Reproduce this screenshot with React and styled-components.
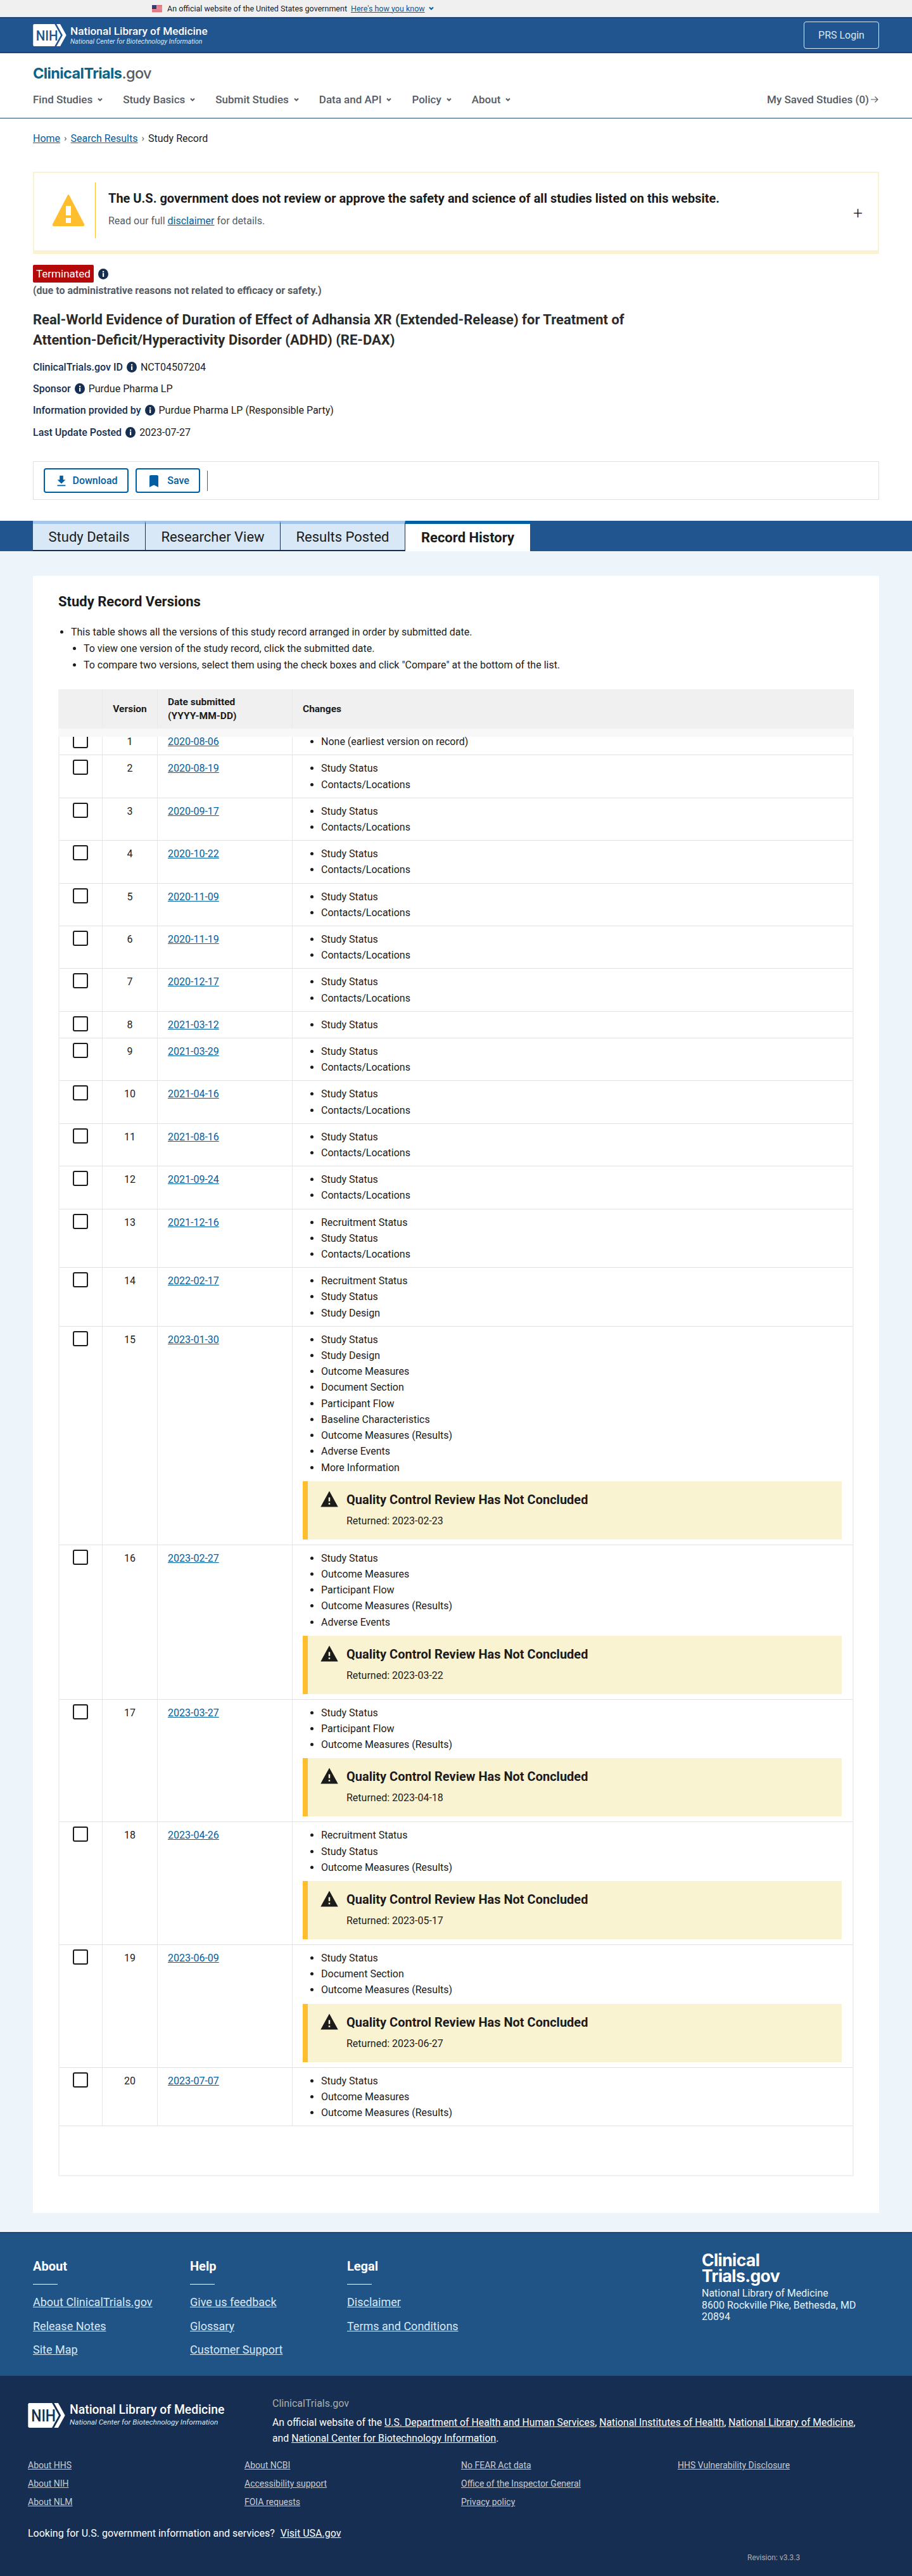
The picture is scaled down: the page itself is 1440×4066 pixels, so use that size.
import React from "react";
import styled, { createGlobalStyle } from "styled-components";

const Colors = {
  blue: "#205590",
  footerBlue: "#205487",
  navy: "#162e51",
  link: "#005ea2",
  text: "#1b1b1b",
  grey: "#565c65",
  line: "#dfe1e2",
  page: "#edf5fb",
  warn: "#ffbe2e",
  warnBg: "#faf3d1",
};

const GlobalStyle = createGlobalStyle`
  * { box-sizing: border-box; }
  html, body { margin: 0; padding: 0; background: #fff; }
  body { font-family: Roboto, "Liberation Sans", sans-serif; color: ${Colors.text}; font-size: 16px; }
  a { color: ${Colors.link}; }
`;

const Banner = styled.div`
  height: 27px;
  background: #f0f0f0;
  border-bottom: 1px solid #d9e8f6;
  display: flex;
  align-items: center;
  padding-left: 240px;
  font-size: 12.5px;
  color: ${Colors.text};
`;
const BannerText = styled.span`
  margin: 0 6px 0 8px;
`;
const BannerLink = styled.a`
  margin-right: 5px;
`;

const TopBar = styled.header`
  height: 57px;
  background: ${Colors.blue};
  border-top: 2px solid #1a4480;
  border-bottom: 2px solid #1a4480;
  padding: 0 52px;
  display: flex;
  align-items: center;
  justify-content: space-between;
`;
const LogoRow = styled.div`
  display: flex;
  align-items: center;
  gap: 6px;
`;
const LogoName = styled.div`
  font-size: ${(p) => p.$size}px;
  font-weight: 500;
  line-height: ${(p) => p.$size + 3}px;
  color: #fff;
`;
const LogoSub = styled.div`
  font-size: ${(p) => p.$size}px;
  font-style: italic;
  line-height: ${(p) => p.$size + 3}px;
  color: #d9e8f6;
`;
const LoginBtn = styled.a`
  width: 119px;
  height: 43px;
  border: 1.5px solid #d9e8f6;
  border-radius: 4px;
  display: flex;
  align-items: center;
  justify-content: center;
  color: #d9e8f6;
  font-size: 16px;
`;

const SiteHead = styled.div`
  height: 103px;
  padding: 18px 52px 0;
  border-bottom: 1px solid #20496b;
`;
const Brand = styled.div`
  font-family: Inter, sans-serif;
  font-size: 23.5px;
  font-weight: 700;
  line-height: 28px;
  letter-spacing: -0.6px;
  color: #0a6586;
`;
const BrandGov = styled.span`
  font-weight: 500;
  color: ${Colors.grey};
`;
const Nav = styled.nav`
  display: flex;
  align-items: center;
  margin-top: 15px;
  height: 24px;
  color: ${Colors.grey};
  font-size: 17px;
  font-weight: 500;
`;
const NavItem = styled.span`
  display: flex;
  align-items: center;
  gap: 7px;
  margin-right: 31px;
`;
const SavedLink = styled.span`
  margin-left: auto;
  display: flex;
  align-items: center;
  gap: 2px;
`;

const Content = styled.div`
  padding: 20px 52px 0;
`;
const Crumbs = styled.div`
  display: flex;
  align-items: center;
  gap: 6px;
  height: 22px;
  font-size: 16px;
`;
const CrumbSep = styled.span`
  color: ${Colors.grey};
  font-size: 15px;
`;

const Disclaimer = styled.div`
  margin-top: 42px;
  height: 130px;
  border: 2px solid ${Colors.warnBg};
  border-bottom-width: 6px;
  padding: 15px 28px 19px;
  display: flex;
  align-items: stretch;
  position: relative;
`;
const DisclaimerIcon = styled.div`
  width: 52px;
  display: flex;
  align-items: center;
`;
const DisclaimerBody = styled.div`
  margin-left: 16px;
  padding-left: 20px;
  border-left: 1px solid ${Colors.warn};
  padding-top: 11px;
`;
const DisclaimerTitle = styled.div`
  font-size: 20px;
  font-weight: 700;
  line-height: 28px;
`;
const DisclaimerSub = styled.div`
  margin-top: 10px;
  color: ${Colors.grey};
  line-height: 24px;
`;
const PlusIcon = styled.div`
  position: absolute;
  right: 24px;
  top: 50px;
  font-size: 26px;
  font-weight: 300;
  line-height: 26px;
  color: #222;
`;

const StatusRow = styled.div`
  margin-top: 17px;
  display: flex;
  align-items: center;
  gap: 7px;
`;
const StatusTag = styled.span`
  width: 96px;
  height: 28px;
  background: #b50909;
  border-radius: 2px;
  color: #fff;
  display: flex;
  align-items: center;
  justify-content: center;
  font-size: 17px;
`;
const StatusNote = styled.div`
  margin-top: 2px;
  font-size: 16px;
  font-weight: 700;
  color: ${Colors.grey};
  line-height: 22px;
`;
const StudyTitle = styled.h1`
  margin: 19px 0 0;
  width: 1010px;
  font-size: 22px;
  line-height: 32px;
  font-weight: 700;
  color: #2b2b2b;
`;
const MetaList = styled.div`
  margin-top: 9px;
`;
const MetaRow = styled.div`
  height: 34.3px;
  display: flex;
  align-items: center;
  gap: 6px;
`;
const MetaLabel = styled.span`
  color: ${Colors.navy};
  font-weight: 500;
`;
const ActionBar = styled.div`
  margin-top: 29px;
  height: 61px;
  border: 1px solid ${Colors.line};
  padding: 10px 16px;
  display: flex;
  align-items: center;
  gap: 11px;
`;
const ActionBtn = styled.a`
  width: ${(p) => p.$w}px;
  height: 39px;
  border: 2px solid ${Colors.link};
  border-radius: 4px;
  display: flex;
  align-items: center;
  justify-content: center;
  gap: ${(p) => p.$gap}px;
  color: ${Colors.link};
  font-weight: 500;
  font-size: 16px;
`;
const ActionSep = styled.span`
  width: 1px;
  height: 32px;
  background: ${Colors.grey};
`;

const TabBand = styled.div`
  margin-top: 33px;
  height: 48px;
  background: ${Colors.blue};
  padding-left: 52px;
  display: flex;
`;
const Tab = styled.div`
  width: ${(p) => p.$w}px;
  display: flex;
  align-items: center;
  justify-content: center;
  font-size: 22px;
  color: ${Colors.text};
  background: ${(p) => (p.$active ? "#fff" : "#d9e8f6")};
  font-weight: ${(p) => (p.$active ? 700 : 400)};
  border-top: 5px solid ${(p) => (p.$active ? Colors.link : "#a1c6ea")};
  border-right: ${(p) => (p.$active ? "none" : `1px solid ${Colors.navy}`)};
  border-bottom: ${(p) => (p.$active ? "none" : `2px solid ${Colors.navy}`)};
`;

const Page = styled.main`
  background: ${Colors.page};
  padding: 39px 52px 30px;
`;
const Card = styled.section`
  height: 2584px;
  background: #fff;
  padding: 26px 40px 0;
`;
const CardTitle = styled.h2`
  margin: 0;
  height: 30px;
  font-size: 22px;
  line-height: 30px;
  font-weight: 700;
`;
const Intro = styled.ul`
  margin: 20px 0 0;
  padding-left: 20px;
  line-height: 26px;
  color: ${Colors.text};
`;
const IntroSub = styled.ul`
  margin: 0;
  padding-left: 20px;
  list-style: disc;
`;

const VersionTable = styled.div`
  margin-top: 25px;
  height: 2347px;
  border-left: 2px solid #f0f0f0;
  border-right: 2px solid #f0f0f0;
  border-bottom: 2px solid #f0f0f0;
`;
const HeadRow = styled.div`
  height: 62px;
  margin: 0 -2px;
  background: #f0f0f0;
  display: grid;
  grid-template-columns: 70px 87px 213px 1fr;
  font-weight: 700;
  font-size: 15.5px;
  line-height: 22px;
  position: relative;
  z-index: 1;

  &::after {
    content: "";
    position: absolute;
    left: 0;
    right: 0;
    top: 100%;
    height: 13px;
    background: #f8f8f8;
  }
`;
const HeadCell = styled.div`
  display: flex;
  align-items: center;
  padding-left: ${(p) => p.$pad}px;
  justify-content: ${(p) => (p.$center ? "center" : "flex-start")};
  border-right: 1px solid #eaeaea;
`;
const Row = styled.div`
  display: grid;
  grid-template-columns: 68px 87px 213px 1fr;
  border-bottom: 1px solid ${Colors.line};
`;
const Cell = styled.div`
  padding: 8px;
  line-height: 25.2px;
  border-right: 1px solid ${(p) => (p.$last ? "transparent" : "#e6e7e8")};
  text-align: ${(p) => (p.$center ? "center" : "left")};
`;
const DateCell = styled(Cell)`
  padding-left: 16px;
`;
const CheckCell = styled(Cell)`
  padding: 7px 0 0 21px;
`;
const Check = styled.div`
  width: 24px;
  height: 24px;
  border: 2px solid ${Colors.text};
  border-radius: 3px;
  background: #fff;
`;
const Changes = styled.ul`
  margin: 0;
  padding-left: 37px;
`;
const ChangesCell = styled(Cell)`
  padding: 8px 16px 8px 8px;
`;
const QcNotice = styled.div`
  margin: 9px 0 0 8px;
  height: 92px;
  background: ${Colors.warnBg};
  border-left: 8px solid ${Colors.warn};
  padding: 15px 0 0 19px;
  display: grid;
  grid-template-columns: 42px 1fr;
  align-items: center;
  align-content: start;
`;
const QcIcon = styled.div`
  display: flex;
  margin-top: -2px;
`;
const QcTitle = styled.div`
  font-size: 20px;
  font-weight: 700;
  line-height: 28px;
`;
const QcDate = styled.div`
  grid-column: 2;
  margin-top: 8px;
  line-height: 24px;
`;

const FooterTop = styled.div`
  height: 227px;
  background: ${Colors.footerBlue};
  border-top: 2px solid #1a4480;
  padding: 0 52px;
  display: flex;
`;
const FooterCol = styled.div`
  width: 248px;
  padding-top: 39px;
`;
const FooterHead = styled.div`
  font-size: 20px;
  font-weight: 700;
  line-height: 26px;
  color: #fff;
`;
const FooterRule = styled.div`
  width: 39px;
  height: 1px;
  background: #fff;
  margin: 15px 0 16px;
`;
const FooterLink = styled.a`
  display: block;
  color: #d9e8f6;
  font-size: 18px;
  line-height: 24px;
  margin-bottom: 13.5px;
  text-decoration: underline;
`;
const FooterAddress = styled.div`
  margin-left: auto;
  width: 280px;
  padding-top: 30px;
  color: #e7f2f5;
  font-size: 16px;
  line-height: 18.5px;
`;
const FooterBrand = styled.div`
  font-family: Inter, sans-serif;
  color: #fff;
  font-size: 26.5px;
  font-weight: 700;
  line-height: 25px;
  letter-spacing: -0.6px;
  margin-bottom: 6px;
`;

const FooterBottom = styled.footer`
  height: 316px;
  background: ${Colors.navy};
  padding: 34px 44px 0;
  color: #fff;
`;
const FooterMain = styled.div`
  display: flex;
`;
const FooterLogo = styled(LogoRow)`
  width: 386px;
  align-items: flex-start;
  padding-top: 9px;
  gap: 7px;
`;
const OfficialName = styled.div`
  color: #a9aeb1;
  font-size: 16px;
  line-height: 20px;
`;
const OfficialText = styled.div`
  margin-top: 7px;
  width: 950px;
  font-size: 15.8px;
  line-height: 25px;
  a { color: #fff; }
`;
const LinkGrid = styled.div`
  margin-top: 19px;
  display: grid;
  grid-template-columns: repeat(4, 342px);
  row-gap: 7px;
  font-size: 14px;
  line-height: 22px;
  a { color: #c9ccd2; }
`;
const LookingFor = styled.div`
  margin-top: 27px;
  font-size: 16px;
  line-height: 24px;
  a { color: #fff; margin-left: 5px; }
`;
const Revision = styled.div`
  margin: 18px 0 0 1136px;
  font-size: 12px;
  line-height: 16px;
  color: #a9aeb1;
`;

const Chevron = ({ color = "currentColor", size = 10 }) => (
  <svg width={size} height={size} viewBox="0 0 10 10">
    <path d="M2 3.5 L5 6.5 L8 3.5" fill="none" stroke={color} strokeWidth="2" />
  </svg>
);

const ArrowRight = () => (
  <svg width="14" height="14" viewBox="0 0 14 14">
    <path d="M1 7 H12 M7.5 2.5 L12 7 L7.5 11.5" fill="none" stroke={Colors.grey} strokeWidth="1.2" />
  </svg>
);

const Flag = () => (
  <svg width="16" height="11" viewBox="0 0 16 11">
    <rect width="16" height="11" fill="#fff" />
    {[0, 2, 4, 6, 8, 10].map((y) => (
      <rect key={y} y={y} width="16" height="1" fill="#c8313e" />
    ))}
    <rect width="7" height="6" fill="#3c3b6e" />
  </svg>
);

const NihLogo = ({ ink, width }) => (
  <svg width={width} height={width * 0.66} viewBox="0 0 54 36">
    <path d="M2 0 H35 L45 18 L35 36 H2 Q0 36 0 34 V2 Q0 0 2 0 Z" fill="#fff" />
    <path d="M38 0 H44 L54 18 L44 36 H38 L48 18 Z" fill="#fff" />
    <text x="4.5" y="26.5" fontFamily="Roboto, sans-serif" fontSize="23" fontWeight="500" fill={ink} textLength="36" lengthAdjust="spacingAndGlyphs">
      NIH
    </text>
  </svg>
);

const Info = () => (
  <svg width="16" height="17" viewBox="0 0 16 17">
    <ellipse cx="8" cy="8.5" rx="8" ry="8.5" fill={Colors.navy} />
    <rect x="7" y="7" width="2.2" height="6" fill="#fff" />
    <rect x="7" y="3.8" width="2.2" height="2.2" fill="#fff" />
  </svg>
);

const Warning = ({ size, fill }) => (
  <svg width={size} height={size} viewBox="0 0 24 24">
    <path d="M1 22 H23 L12 2 Z M13 19 H11 V17 H13 Z M13 15 H11 V10 H13 Z" fill={fill} fillRule="evenodd" />
  </svg>
);

const BigWarning = () => (
  <svg width="52" height="52" viewBox="0 0 52 52">
    <path d="M26 2 L50 48 Q51 50 49 50 H3 Q1 50 2 48 Z" fill="#ffbe2e" stroke="#ffbe2e" strokeWidth="2" strokeLinejoin="round" />
    <rect x="22" y="19" width="8" height="15" fill="#fff" />
    <rect x="22" y="38" width="8" height="8" fill="#fff" />
  </svg>
);

const Download = () => (
  <svg width="22" height="24" viewBox="0 0 24 24">
    <path d="M19 10 H15 V3 H9 V10 H5 L12 17 Z M5 19 V21 H19 V19 Z" fill={Colors.link} />
  </svg>
);

const Bookmark = () => (
  <svg width="24" height="24" viewBox="0 0 24 24">
    <path d="M17 3 H7 C5.9 3 5 3.9 5 5 V22 L12 18.5 L19 22 V5 C19 3.9 18.1 3 17 3 Z" fill={Colors.link} />
  </svg>
);

const SS = "Study Status";
const CL = "Contacts/Locations";
const OM = "Outcome Measures";
const OR = "Outcome Measures (Results)";
const RS = "Recruitment Status";
const SD = "Study Design";
const DS = "Document Section";
const PF = "Participant Flow";
const AE = "Adverse Events";

const versions = [
  { date: "2020-08-06", changes: ["None (earliest version on record)"] },
  { date: "2020-08-19", changes: [SS, CL] },
  { date: "2020-09-17", changes: [SS, CL] },
  { date: "2020-10-22", changes: [SS, CL] },
  { date: "2020-11-09", changes: [SS, CL] },
  { date: "2020-11-19", changes: [SS, CL] },
  { date: "2020-12-17", changes: [SS, CL] },
  { date: "2021-03-12", changes: [SS] },
  { date: "2021-03-29", changes: [SS, CL] },
  { date: "2021-04-16", changes: [SS, CL] },
  { date: "2021-08-16", changes: [SS, CL] },
  { date: "2021-09-24", changes: [SS, CL] },
  { date: "2021-12-16", changes: [RS, SS, CL] },
  { date: "2022-02-17", changes: [RS, SS, SD] },
  {
    date: "2023-01-30",
    changes: [SS, SD, OM, DS, PF, "Baseline Characteristics", OR, AE, "More Information"],
    returned: "2023-02-23",
  },
  { date: "2023-02-27", changes: [SS, OM, PF, OR, AE], returned: "2023-03-22" },
  { date: "2023-03-27", changes: [SS, PF, OR], returned: "2023-04-18" },
  { date: "2023-04-26", changes: [RS, SS, OR], returned: "2023-05-17" },
  { date: "2023-06-09", changes: [SS, DS, OR], returned: "2023-06-27" },
  { date: "2023-07-07", changes: [SS, OM, OR] },
];

const footerCols = [
  { head: "About", links: ["About ClinicalTrials.gov", "Release Notes", "Site Map"] },
  { head: "Help", links: ["Give us feedback", "Glossary", "Customer Support"] },
  { head: "Legal", links: ["Disclaimer", "Terms and Conditions"] },
];

const govLinks = [
  "About HHS", "About NCBI", "No FEAR Act data", "HHS Vulnerability Disclosure",
  "About NIH", "Accessibility support", "Office of the Inspector General", "",
  "About NLM", "FOIA requests", "Privacy policy", "",
];

const navItems = ["Find Studies", "Study Basics", "Submit Studies", "Data and API", "Policy", "About"];

const meta = [
  ["ClinicalTrials.gov ID", "NCT04507204"],
  ["Sponsor", "Purdue Pharma LP"],
  ["Information provided by", "Purdue Pharma LP (Responsible Party)"],
  ["Last Update Posted", "2023-07-27"],
];

export default function App() {
  return (
    <>
      <GlobalStyle />
      <Banner>
        <Flag />
        <BannerText>An official website of the United States government</BannerText>
        <BannerLink href="#">Here's how you know</BannerLink>
        <Chevron color={Colors.link} />
      </Banner>
      <TopBar>
        <LogoRow>
          <NihLogo ink={Colors.blue} width={53} />
          <div>
            <LogoName $size={17.2}>National Library of Medicine</LogoName>
            <LogoSub $size={10.5}>National Center for Biotechnology Information</LogoSub>
          </div>
        </LogoRow>
        <LoginBtn>PRS Login</LoginBtn>
      </TopBar>
      <SiteHead>
        <Brand>
          ClinicalTrials<BrandGov>.gov</BrandGov>
        </Brand>
        <Nav>
          {navItems.map((item) => (
            <NavItem key={item}>
              {item} <Chevron />
            </NavItem>
          ))}
          <SavedLink>
            My Saved Studies (0) <ArrowRight />
          </SavedLink>
        </Nav>
      </SiteHead>

      <Content>
        <Crumbs>
          <a href="#">Home</a>
          <CrumbSep>›</CrumbSep>
          <a href="#">Search Results</a>
          <CrumbSep>›</CrumbSep>
          <span>Study Record</span>
        </Crumbs>

        <Disclaimer>
          <DisclaimerIcon>
            <BigWarning />
          </DisclaimerIcon>
          <DisclaimerBody>
            <DisclaimerTitle>
              The U.S. government does not review or approve the safety and science of all studies listed on this website.
            </DisclaimerTitle>
            <DisclaimerSub>
              Read our full <a href="#">disclaimer</a> for details.
            </DisclaimerSub>
          </DisclaimerBody>
          <PlusIcon>+</PlusIcon>
        </Disclaimer>

        <StatusRow>
          <StatusTag>Terminated</StatusTag>
          <Info />
        </StatusRow>
        <StatusNote>(due to administrative reasons not related to efficacy or safety.)</StatusNote>
        <StudyTitle>
          Real-World Evidence of Duration of Effect of Adhansia XR (Extended-Release) for Treatment of
          Attention-Deficit/Hyperactivity Disorder (ADHD) (RE-DAX)
        </StudyTitle>
        <MetaList>
          {meta.map(([label, value]) => (
            <MetaRow key={label}>
              <MetaLabel>{label}</MetaLabel>
              <Info />
              <span>{value}</span>
            </MetaRow>
          ))}
        </MetaList>
        <ActionBar>
          <ActionBtn $w={134} $gap={6}>
            <Download /> Download
          </ActionBtn>
          <ActionBtn $w={102} $gap={9}>
            <Bookmark /> Save
          </ActionBtn>
          <ActionSep />
        </ActionBar>
      </Content>

      <TabBand>
        <Tab $w={178}>Study Details</Tab>
        <Tab $w={213}>Researcher View</Tab>
        <Tab $w={197}>Results Posted</Tab>
        <Tab $w={197} $active>Record History</Tab>
      </TabBand>

      <Page>
        <Card>
          <CardTitle>Study Record Versions</CardTitle>
          <Intro>
            <li>This table shows all the versions of this study record arranged in order by submitted date.</li>
            <IntroSub>
              <li>To view one version of the study record, click the submitted date.</li>
              <li>To compare two versions, select them using the check boxes and click "Compare" at the bottom of the list.</li>
            </IntroSub>
          </Intro>
          <VersionTable>
            <HeadRow>
              <HeadCell />
              <HeadCell $center>Version</HeadCell>
              <HeadCell $pad={16}>
                Date submitted
                <br />
                (YYYY-MM-DD)
              </HeadCell>
              <HeadCell $pad={16}>Changes</HeadCell>
            </HeadRow>
            {versions.map((v, i) => (
              <Row key={v.date}>
                <CheckCell>
                  <Check />
                </CheckCell>
                <Cell $center>{i + 1}</Cell>
                <DateCell>
                  <a href="#">{v.date}</a>
                </DateCell>
                <ChangesCell $last>
                  <Changes>
                    {v.changes.map((c) => (
                      <li key={c}>{c}</li>
                    ))}
                  </Changes>
                  {v.returned && (
                    <QcNotice>
                      <QcIcon>
                        <Warning size={30} fill={Colors.text} />
                      </QcIcon>
                      <QcTitle>Quality Control Review Has Not Concluded</QcTitle>
                      <QcDate>Returned: {v.returned}</QcDate>
                    </QcNotice>
                  )}
                </ChangesCell>
              </Row>
            ))}
          </VersionTable>
        </Card>
      </Page>

      <FooterTop>
        {footerCols.map((col) => (
          <FooterCol key={col.head}>
            <FooterHead>{col.head}</FooterHead>
            <FooterRule />
            {col.links.map((l) => (
              <FooterLink key={l}>{l}</FooterLink>
            ))}
          </FooterCol>
        ))}
        <FooterAddress>
          <FooterBrand>
            Clinical
            <br />
            Trials.gov
          </FooterBrand>
          National Library of Medicine
          <br />
          8600 Rockville Pike, Bethesda, MD 20894
        </FooterAddress>
      </FooterTop>

      <FooterBottom>
        <FooterMain>
          <FooterLogo>
            <NihLogo ink={Colors.navy} width={59} />
            <div>
              <LogoName $size={19.4}>National Library of Medicine</LogoName>
              <LogoSub $size={11.8}>National Center for Biotechnology Information</LogoSub>
            </div>
          </FooterLogo>
          <div>
            <OfficialName>ClinicalTrials.gov</OfficialName>
            <OfficialText>
              An official website of the <a href="#">U.S. Department of Health and Human Services</a>,{" "}
              <a href="#">National Institutes of Health</a>, <a href="#">National Library of Medicine</a>,
              <br />
              and <a href="#">National Center for Biotechnology Information</a>.
            </OfficialText>
          </div>
        </FooterMain>
        <LinkGrid>
          {govLinks.map((l, i) => (
            <div key={i}>{l && <a href="#">{l}</a>}</div>
          ))}
        </LinkGrid>
        <LookingFor>
          Looking for U.S. government information and services? <a href="#">Visit USA.gov</a>
        </LookingFor>
        <Revision>Revision: v3.3.3</Revision>
      </FooterBottom>
    </>
  );
}
